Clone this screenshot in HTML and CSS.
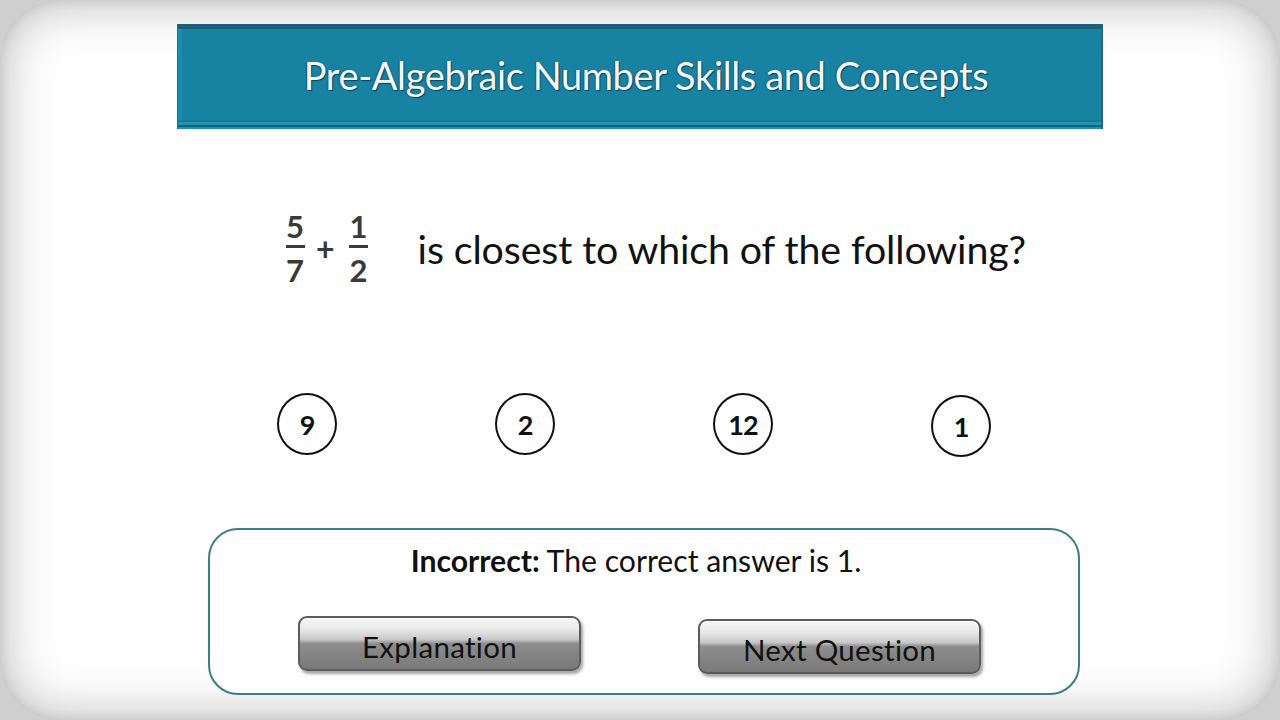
FILE: index.html
```html
<!DOCTYPE html>
<html lang="en">
<head>
<meta charset="utf-8">
<title>Pre-Algebraic Number Skills and Concepts</title>
<link rel="stylesheet" href="styles.css">
</head>
<body>
<div class="screen">
  <div class="header">
    <h1 class="title">Pre-Algebraic Number Skills and Concepts</h1>
  </div>

  <div class="question">
    <div class="expr">
      <span class="frac"><span class="num">5</span><span class="bar"></span><span class="den">7</span></span>
      <span class="plus">+</span>
      <span class="frac"><span class="num">1</span><span class="bar"></span><span class="den">2</span></span>
    </div>
    <p class="qtext">is closest to which of the following?</p>
  </div>

  <div class="options">
    <div class="opt">9</div>
    <div class="opt">2</div>
    <div class="opt">12</div>
    <div class="opt opt-last">1</div>
  </div>

  <div class="feedback">
    <p class="result"><b>Incorrect:</b> The correct answer is 1.</p>
    <div class="actions">
      <button class="btn">Explanation</button>
      <button class="btn btn-next">Next Question</button>
    </div>
  </div>
</div>
</body>
</html>
```

FILE: styles.css
```css
html, body {
  margin: 0;
  padding: 0;
  background: #cfcfcf;
}

.screen {
  width: 1280px;
  height: 720px;
  box-sizing: border-box;
  padding-top: 24px;
  display: flex;
  flex-direction: column;
  align-items: flex-start;
  background: #fefefe;
  border-radius: 60px;
  box-shadow: inset 0 0 46px 8px rgba(0, 0, 0, 0.22), inset 0 0 12px rgba(0, 0, 0, 0.12);
  font-family: Lato, "Open Sans", sans-serif;
  color: #111;
}

.header {
  margin-left: 177px;
  width: 926px;
  height: 105px;
  box-sizing: border-box;
  padding-left: 13px;
  background: #1882a2;
  border-top: 5px solid #1c6079;
  border-left: 1px solid #1b6f8a;
  border-right: 2px solid #1b6a84;
  box-shadow: inset 0 -2px 0 #1d91b3, inset 0 -4px 0 #16607a, inset 0 -7px 0 #1c95b8, inset 0 -9px 0 #1a7795, inset 4px 0 0 #1c8db0;
  display: flex;
  align-items: center;
  justify-content: center;
}

.title {
  margin: 0 0 8px 0;
  font-family: Lato, "Open Sans", sans-serif;
  font-weight: 400;
  font-size: 38px;
  letter-spacing: -0.4px;
  color: #f4f8f8;
  text-shadow: 1px 1px 1px #0d4256, -1px 0 1px rgba(13, 66, 86, 0.6);
}

.question {
  margin-top: 79px;
  margin-left: 283px;
  display: flex;
  align-items: center;
  height: 80px;
}

.expr {
  display: flex;
  align-items: center;
  color: #3a3a3a;
}

.frac {
  display: inline-flex;
  flex-direction: column;
  align-items: center;
  width: 24px;
}

.num, .den {
  font-family: Lato, sans-serif;
  font-weight: 700;
  font-size: 31px;
  line-height: 32px;
}

.bar {
  display: block;
  width: 19px;
  height: 3px;
  background: #3a3a3a;
  margin: 3px 0 6px;
}

.plus {
  font-size: 32px;
  font-weight: 700;
  margin: 0 12px 0 9px;
}

.qtext {
  margin: 0 0 0 47px;
  font-size: 39.3px;
  letter-spacing: -0.1px;
  color: #111;
}

.options {
  margin-top: 105px;
  margin-left: 277px;
  display: flex;
  gap: 158px;
}

.opt {
  width: 56px;
  height: 58px;
  border: 2px solid #111;
  border-radius: 50%;
  display: flex;
  align-items: center;
  justify-content: center;
  font-family: Lato, sans-serif;
  font-weight: 700;
  font-size: 27px;
  letter-spacing: -1px;
  color: #111;
}

.opt-last {
  margin-top: 2px;
}

.feedback {
  margin-top: 71px;
  margin-left: 208px;
  width: 872px;
  height: 167px;
  box-sizing: border-box;
  border: 2px solid #3d7d86;
  border-radius: 30px;
  background: #fefefe;
  display: flex;
  flex-direction: column;
  align-items: flex-start;
}

.result {
  align-self: center;
  margin: 11px 16px 0 0;
  font-size: 30.2px;
  line-height: 38px;
  color: #111;
}

.result b {
  font-weight: 700;
}

.actions {
  margin-top: 37px;
  margin-left: 88px;
  display: flex;
  align-items: flex-start;
  gap: 117px;
}

.btn {
  width: 283px;
  height: 55px;
  padding: 6px 0 0 0;
  border: 2px solid #5c5c5c;
  border-radius: 9px;
  background: linear-gradient(to bottom, #f7f7f7 0%, #e8e8e8 22%, #c8c8c8 42%, #8e8e8e 50%, #848484 72%, #7a7a7a 100%);
  box-shadow: 2px 3px 3px rgba(0, 0, 0, 0.35), inset 0 1px 0 #ffffff;
  font-family: Lato, sans-serif;
  font-size: 29.5px;
  color: #111;
  letter-spacing: 0.3px;
}

.btn-next {
  margin-top: 3px;
}
```
